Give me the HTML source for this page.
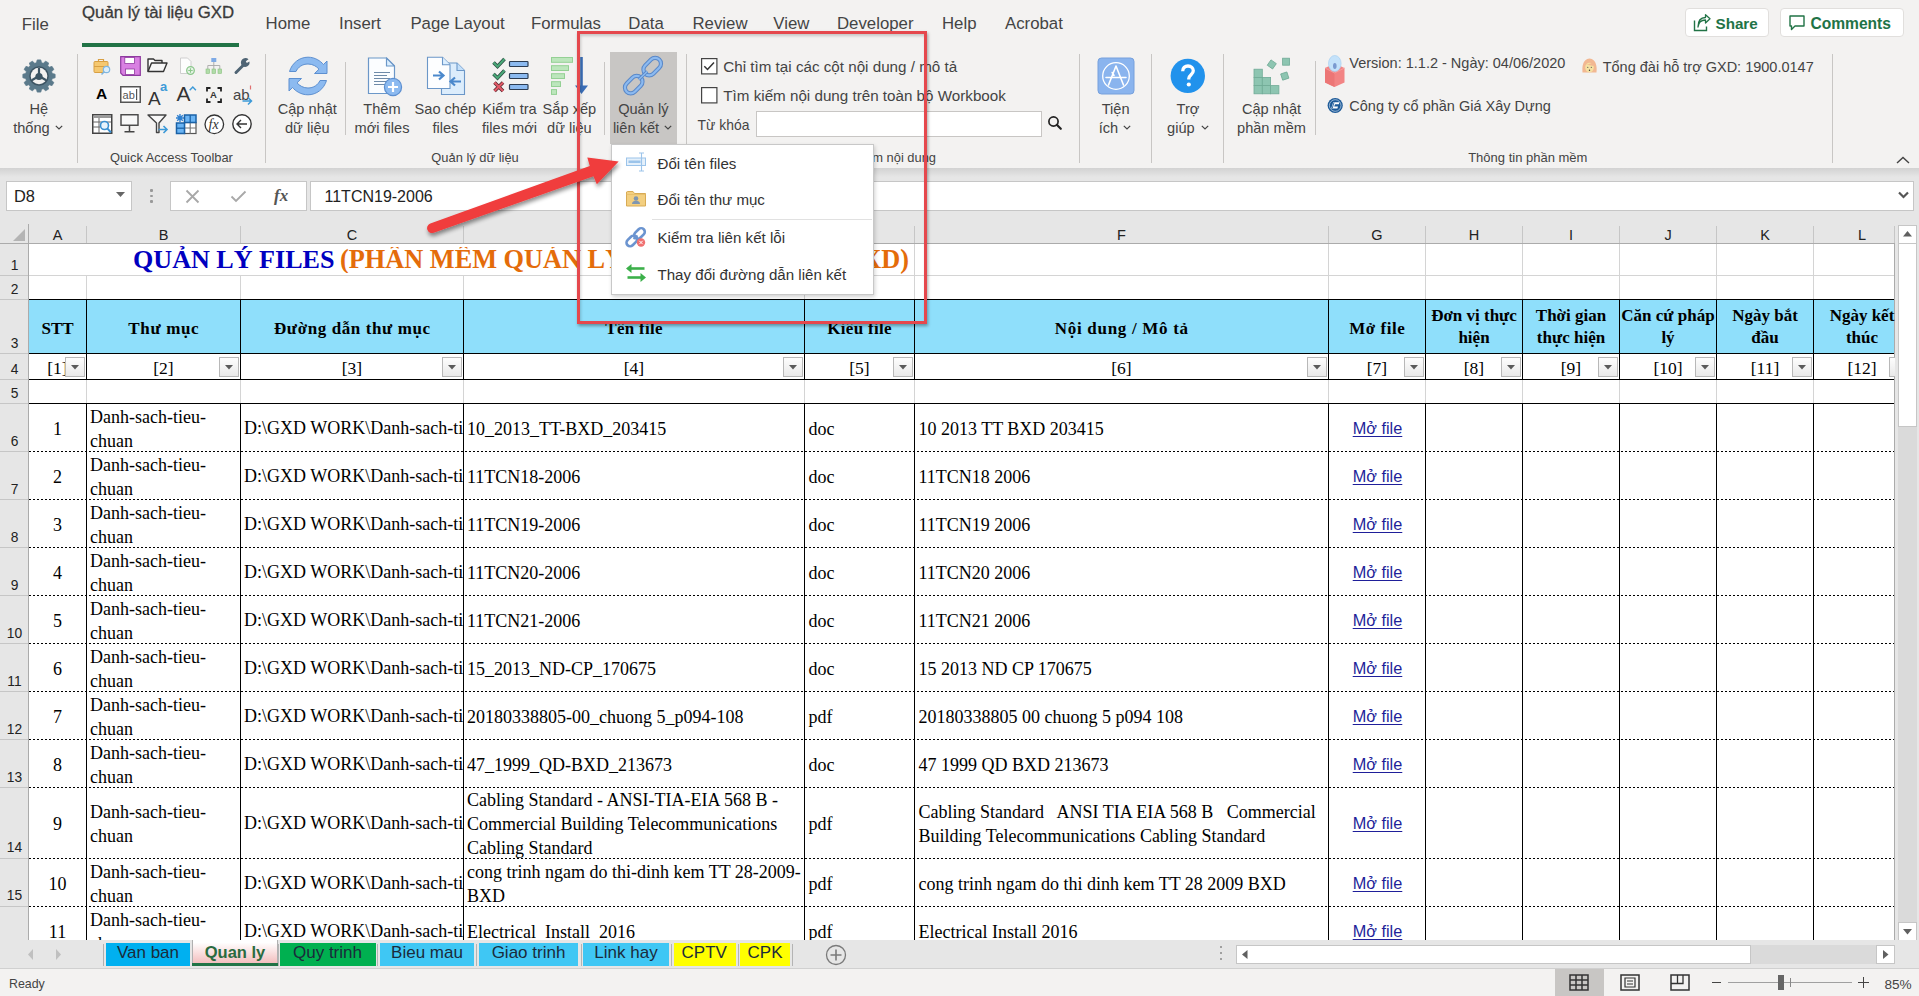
<!DOCTYPE html>
<html><head><meta charset="utf-8"><style>
html,body{margin:0;padding:0;width:1919px;height:996px;overflow:hidden;background:#fff;}
.a{position:absolute;white-space:nowrap;}
svg.a{overflow:visible}
</style></head><body>
<div class="a" style="left:0px;top:0px;width:1919px;height:168px;background:#f3f2f1"></div>
<div class="a" style="left:0px;top:168px;width:1919px;height:56px;background:#e6e6e6"></div>
<div class="a" style="left:0px;top:168px;width:1919px;height:9px;background:linear-gradient(#d2d2d2,#e6e6e6)"></div>
<div class="a" style="left:21.7px;top:17.0px;font:400 16.8px/16.8px 'Liberation Sans', sans-serif;color:#444;">File</div>
<div class="a" style="left:82.0px;top:5.0px;font:400 16.8px/16.8px 'Liberation Sans', sans-serif;color:#3a3a3a;-webkit-text-stroke:0.3px #3a3a3a">Quản lý tài liệu GXD</div>
<div class="a" style="left:82px;top:43px;width:157px;height:4px;background:#217346"></div>
<div class="a" style="left:265.6px;top:16.0px;font:400 16.8px/16.8px 'Liberation Sans', sans-serif;color:#444;">Home</div>
<div class="a" style="left:339.0px;top:16.0px;font:400 16.8px/16.8px 'Liberation Sans', sans-serif;color:#444;">Insert</div>
<div class="a" style="left:410.4px;top:16.0px;font:400 16.8px/16.8px 'Liberation Sans', sans-serif;color:#444;">Page Layout</div>
<div class="a" style="left:531.0px;top:16.0px;font:400 16.8px/16.8px 'Liberation Sans', sans-serif;color:#444;">Formulas</div>
<div class="a" style="left:628.3px;top:16.0px;font:400 16.8px/16.8px 'Liberation Sans', sans-serif;color:#444;">Data</div>
<div class="a" style="left:692.5px;top:16.0px;font:400 16.8px/16.8px 'Liberation Sans', sans-serif;color:#444;">Review</div>
<div class="a" style="left:773.3px;top:16.0px;font:400 16.8px/16.8px 'Liberation Sans', sans-serif;color:#444;">View</div>
<div class="a" style="left:837.0px;top:16.0px;font:400 16.8px/16.8px 'Liberation Sans', sans-serif;color:#444;">Developer</div>
<div class="a" style="left:942.0px;top:16.0px;font:400 16.8px/16.8px 'Liberation Sans', sans-serif;color:#444;">Help</div>
<div class="a" style="left:1005.0px;top:16.0px;font:400 16.8px/16.8px 'Liberation Sans', sans-serif;color:#444;">Acrobat</div>
<div class="a" style="left:1685px;top:8px;width:84px;height:29px;background:#fff;border:1px solid #e1dfdd;border-radius:4px;box-sizing:border-box"></div>
<div class="a" style="left:1780px;top:8px;width:124px;height:29px;background:#fff;border:1px solid #e1dfdd;border-radius:4px;box-sizing:border-box"></div>
<div class="a" style="left:1715.5px;top:16.0px;font:700 15.2px/15.2px 'Liberation Sans', sans-serif;color:#217346;">Share</div>
<div class="a" style="left:1810.4px;top:16.0px;font:700 15.6px/15.6px 'Liberation Sans', sans-serif;color:#217346;">Comments</div>
<div class="a" style="left:-361.3px;width:800px;text-align:center;top:102.0px;font:400 14.6px/14.6px 'Liberation Sans', sans-serif;color:#444;">Hệ</div>
<div class="a" style="left:-368.6px;width:800px;text-align:center;top:121.0px;font:400 14.6px/14.6px 'Liberation Sans', sans-serif;color:#444;">thống</div>
<div class="a" style="left:-228.6px;width:800px;text-align:center;top:152.0px;font:400 12.9px/12.9px 'Liberation Sans', sans-serif;color:#444;">Quick Access Toolbar</div>
<div class="a" style="left:-92.7px;width:800px;text-align:center;top:102.0px;font:400 14.6px/14.6px 'Liberation Sans', sans-serif;color:#444;">Cập nhật</div>
<div class="a" style="left:-92.7px;width:800px;text-align:center;top:121.0px;font:400 14.6px/14.6px 'Liberation Sans', sans-serif;color:#444;">dữ liệu</div>
<div class="a" style="left:-18.0px;width:800px;text-align:center;top:102.0px;font:400 14.6px/14.6px 'Liberation Sans', sans-serif;color:#444;">Thêm</div>
<div class="a" style="left:-18.0px;width:800px;text-align:center;top:121.0px;font:400 14.6px/14.6px 'Liberation Sans', sans-serif;color:#444;">mới files</div>
<div class="a" style="left:45.4px;width:800px;text-align:center;top:102.0px;font:400 14.6px/14.6px 'Liberation Sans', sans-serif;color:#444;">Sao chép</div>
<div class="a" style="left:45.4px;width:800px;text-align:center;top:121.0px;font:400 14.6px/14.6px 'Liberation Sans', sans-serif;color:#444;">files</div>
<div class="a" style="left:109.5px;width:800px;text-align:center;top:102.0px;font:400 14.6px/14.6px 'Liberation Sans', sans-serif;color:#444;">Kiểm tra</div>
<div class="a" style="left:109.5px;width:800px;text-align:center;top:121.0px;font:400 14.6px/14.6px 'Liberation Sans', sans-serif;color:#444;">files mới</div>
<div class="a" style="left:169.4px;width:800px;text-align:center;top:102.0px;font:400 14.6px/14.6px 'Liberation Sans', sans-serif;color:#444;">Sắp xếp</div>
<div class="a" style="left:169.4px;width:800px;text-align:center;top:121.0px;font:400 14.6px/14.6px 'Liberation Sans', sans-serif;color:#444;">dữ liệu</div>
<div class="a" style="left:75.0px;width:800px;text-align:center;top:152.0px;font:400 12.9px/12.9px 'Liberation Sans', sans-serif;color:#444;">Quản lý dữ liệu</div>
<div class="a" style="left:610px;top:52px;width:67px;height:92px;background:#c8c6c4"></div>
<div class="a" style="left:243.3px;width:800px;text-align:center;top:102.0px;font:400 14.6px/14.6px 'Liberation Sans', sans-serif;color:#444;">Quản lý</div>
<div class="a" style="left:236.0px;width:800px;text-align:center;top:121.0px;font:400 14.6px/14.6px 'Liberation Sans', sans-serif;color:#444;">liên kết</div>
<div class="a" style="left:483.0px;width:800px;text-align:center;top:152.0px;font:400 12.9px/12.9px 'Liberation Sans', sans-serif;color:#444;">Tìm kiếm nội dung</div>
<div class="a" style="left:723.3px;top:59.0px;font:400 15.2px/15.2px 'Liberation Sans', sans-serif;color:#444;">Chỉ tìm tại các cột nội dung / mô tả</div>
<div class="a" style="left:723.3px;top:88.0px;font:400 15.2px/15.2px 'Liberation Sans', sans-serif;color:#444;">Tìm kiếm nội dung trên toàn bộ Workbook</div>
<div class="a" style="left:697.6px;top:119.0px;font:400 13.9px/13.9px 'Liberation Sans', sans-serif;color:#444;">Từ khóa</div>
<div class="a" style="left:756px;top:111px;width:286px;height:26px;background:#fff;border:1px solid #c8c6c4;box-sizing:border-box"></div>
<div class="a" style="left:715.7px;width:800px;text-align:center;top:102.0px;font:400 14.6px/14.6px 'Liberation Sans', sans-serif;color:#444;">Tiện</div>
<div class="a" style="left:708.4px;width:800px;text-align:center;top:121.0px;font:400 14.6px/14.6px 'Liberation Sans', sans-serif;color:#444;">ích</div>
<div class="a" style="left:788.0px;width:800px;text-align:center;top:102.0px;font:400 14.6px/14.6px 'Liberation Sans', sans-serif;color:#444;">Trợ</div>
<div class="a" style="left:780.9px;width:800px;text-align:center;top:121.0px;font:400 14.6px/14.6px 'Liberation Sans', sans-serif;color:#444;">giúp</div>
<div class="a" style="left:871.5px;width:800px;text-align:center;top:102.0px;font:400 14.6px/14.6px 'Liberation Sans', sans-serif;color:#444;">Cập nhật</div>
<div class="a" style="left:871.5px;width:800px;text-align:center;top:121.0px;font:400 14.6px/14.6px 'Liberation Sans', sans-serif;color:#444;">phần mềm</div>
<div class="a" style="left:1349.3px;top:56.0px;font:400 14.5px/14.5px 'Liberation Sans', sans-serif;color:#444;">Version: 1.1.2 - Ngày: 04/06/2020</div>
<div class="a" style="left:1349.3px;top:99.0px;font:400 14.5px/14.5px 'Liberation Sans', sans-serif;color:#444;">Công ty cổ phần Giá Xây Dựng</div>
<div class="a" style="left:1602.7px;top:60.0px;font:400 14.5px/14.5px 'Liberation Sans', sans-serif;color:#444;">Tổng đài hỗ trợ GXD: 1900.0147</div>
<div class="a" style="left:1127.8px;width:800px;text-align:center;top:151.0px;font:400 13px/13px 'Liberation Sans', sans-serif;color:#444;">Thông tin phần mềm</div>
<div class="a" style="left:77px;top:54px;width:1px;height:109px;background:#c8c6c4"></div>
<div class="a" style="left:265px;top:54px;width:1px;height:109px;background:#c8c6c4"></div>
<div class="a" style="left:345px;top:62px;width:1px;height:73px;background:#c8c6c4"></div>
<div class="a" style="left:604px;top:62px;width:1px;height:73px;background:#c8c6c4"></div>
<div class="a" style="left:686px;top:54px;width:1px;height:109px;background:#c8c6c4"></div>
<div class="a" style="left:1079px;top:54px;width:1px;height:109px;background:#c8c6c4"></div>
<div class="a" style="left:1151px;top:54px;width:1px;height:109px;background:#c8c6c4"></div>
<div class="a" style="left:1223px;top:54px;width:1px;height:109px;background:#c8c6c4"></div>
<div class="a" style="left:1315px;top:61px;width:1px;height:74px;background:#c8c6c4"></div>
<div class="a" style="left:1832px;top:54px;width:1px;height:109px;background:#c8c6c4"></div>
<div class="a" style="left:6px;top:181px;width:126px;height:30px;background:#fff;border:1px solid #c6c6c6;box-sizing:border-box"></div>
<div class="a" style="left:14.0px;top:188.0px;font:400 16.4px/16.4px 'Liberation Sans', sans-serif;color:#222;">D8</div>
<div class="a" style="left:170px;top:181px;width:137px;height:30px;background:#fff;border:1px solid #c6c6c6;box-sizing:border-box"></div>
<div class="a" style="left:310px;top:181px;width:1604px;height:30px;background:#fff;border:1px solid #c6c6c6;box-sizing:border-box"></div>
<div class="a" style="left:324.5px;top:189.0px;font:400 16px/16px 'Liberation Sans', sans-serif;color:#222;">11TCN19-2006</div>
<div class="a" style="left:0px;top:224px;width:1919px;height:20px;background:#e6e6e6"></div>
<div class="a" style="left:0px;top:224px;width:28px;height:716px;background:#e6e6e6"></div>
<div class="a" style="left:29px;top:244px;width:1866px;height:696px;background:#fff"></div>
<div class="a" style="left:0px;top:243px;width:1895px;height:1px;background:#ababab"></div>
<div class="a" style="left:28px;top:224px;width:1px;height:716px;background:#ababab"></div>
<div class="a" style="left:-342.5px;width:800px;text-align:center;top:228.0px;font:400 14.5px/14.5px 'Liberation Sans', sans-serif;color:#222;">A</div>
<div class="a" style="left:-236.5px;width:800px;text-align:center;top:228.0px;font:400 14.5px/14.5px 'Liberation Sans', sans-serif;color:#222;">B</div>
<div class="a" style="left:86px;top:226px;width:1px;height:17px;background:#c6c6c6"></div>
<div class="a" style="left:-48.0px;width:800px;text-align:center;top:228.0px;font:400 14.5px/14.5px 'Liberation Sans', sans-serif;color:#222;">C</div>
<div class="a" style="left:240px;top:226px;width:1px;height:17px;background:#c6c6c6"></div>
<div class="a" style="left:234.0px;width:800px;text-align:center;top:228.0px;font:400 14.5px/14.5px 'Liberation Sans', sans-serif;color:#222;">D</div>
<div class="a" style="left:463px;top:226px;width:1px;height:17px;background:#c6c6c6"></div>
<div class="a" style="left:459.5px;width:800px;text-align:center;top:228.0px;font:400 14.5px/14.5px 'Liberation Sans', sans-serif;color:#222;">E</div>
<div class="a" style="left:804px;top:226px;width:1px;height:17px;background:#c6c6c6"></div>
<div class="a" style="left:721.5px;width:800px;text-align:center;top:228.0px;font:400 14.5px/14.5px 'Liberation Sans', sans-serif;color:#222;">F</div>
<div class="a" style="left:914px;top:226px;width:1px;height:17px;background:#c6c6c6"></div>
<div class="a" style="left:977.0px;width:800px;text-align:center;top:228.0px;font:400 14.5px/14.5px 'Liberation Sans', sans-serif;color:#222;">G</div>
<div class="a" style="left:1328px;top:226px;width:1px;height:17px;background:#c6c6c6"></div>
<div class="a" style="left:1074.0px;width:800px;text-align:center;top:228.0px;font:400 14.5px/14.5px 'Liberation Sans', sans-serif;color:#222;">H</div>
<div class="a" style="left:1425px;top:226px;width:1px;height:17px;background:#c6c6c6"></div>
<div class="a" style="left:1171.0px;width:800px;text-align:center;top:228.0px;font:400 14.5px/14.5px 'Liberation Sans', sans-serif;color:#222;">I</div>
<div class="a" style="left:1522px;top:226px;width:1px;height:17px;background:#c6c6c6"></div>
<div class="a" style="left:1268.0px;width:800px;text-align:center;top:228.0px;font:400 14.5px/14.5px 'Liberation Sans', sans-serif;color:#222;">J</div>
<div class="a" style="left:1619px;top:226px;width:1px;height:17px;background:#c6c6c6"></div>
<div class="a" style="left:1365.0px;width:800px;text-align:center;top:228.0px;font:400 14.5px/14.5px 'Liberation Sans', sans-serif;color:#222;">K</div>
<div class="a" style="left:1716px;top:226px;width:1px;height:17px;background:#c6c6c6"></div>
<div class="a" style="left:1462.0px;width:800px;text-align:center;top:228.0px;font:400 14.5px/14.5px 'Liberation Sans', sans-serif;color:#222;">L</div>
<div class="a" style="left:1813px;top:226px;width:1px;height:17px;background:#c6c6c6"></div>
<div class="a" style="left:1894px;top:226px;width:1px;height:17px;background:#c6c6c6"></div>
<div class="a" style="left:0px;top:275px;width:28px;height:1px;background:#c6c6c6"></div>
<div class="a" style="left:-385.5px;width:800px;text-align:center;top:259.0px;font:400 13.8px/13.8px 'Liberation Sans', sans-serif;color:#222;">1</div>
<div class="a" style="left:0px;top:299px;width:28px;height:1px;background:#c6c6c6"></div>
<div class="a" style="left:-385.5px;width:800px;text-align:center;top:283.0px;font:400 13.8px/13.8px 'Liberation Sans', sans-serif;color:#222;">2</div>
<div class="a" style="left:0px;top:353px;width:28px;height:1px;background:#c6c6c6"></div>
<div class="a" style="left:-385.5px;width:800px;text-align:center;top:337.0px;font:400 13.8px/13.8px 'Liberation Sans', sans-serif;color:#222;">3</div>
<div class="a" style="left:0px;top:379px;width:28px;height:1px;background:#c6c6c6"></div>
<div class="a" style="left:-385.5px;width:800px;text-align:center;top:363.0px;font:400 13.8px/13.8px 'Liberation Sans', sans-serif;color:#222;">4</div>
<div class="a" style="left:0px;top:403px;width:28px;height:1px;background:#c6c6c6"></div>
<div class="a" style="left:-385.5px;width:800px;text-align:center;top:387.0px;font:400 13.8px/13.8px 'Liberation Sans', sans-serif;color:#222;">5</div>
<div class="a" style="left:0px;top:451px;width:28px;height:1px;background:#c6c6c6"></div>
<div class="a" style="left:-385.5px;width:800px;text-align:center;top:435.0px;font:400 13.8px/13.8px 'Liberation Sans', sans-serif;color:#222;">6</div>
<div class="a" style="left:0px;top:499px;width:28px;height:1px;background:#c6c6c6"></div>
<div class="a" style="left:-385.5px;width:800px;text-align:center;top:483.0px;font:400 13.8px/13.8px 'Liberation Sans', sans-serif;color:#222;">7</div>
<div class="a" style="left:0px;top:547px;width:28px;height:1px;background:#c6c6c6"></div>
<div class="a" style="left:-385.5px;width:800px;text-align:center;top:531.0px;font:400 13.8px/13.8px 'Liberation Sans', sans-serif;color:#222;">8</div>
<div class="a" style="left:0px;top:595px;width:28px;height:1px;background:#c6c6c6"></div>
<div class="a" style="left:-385.5px;width:800px;text-align:center;top:579.0px;font:400 13.8px/13.8px 'Liberation Sans', sans-serif;color:#222;">9</div>
<div class="a" style="left:0px;top:643px;width:28px;height:1px;background:#c6c6c6"></div>
<div class="a" style="left:-385.5px;width:800px;text-align:center;top:627.0px;font:400 13.8px/13.8px 'Liberation Sans', sans-serif;color:#222;">10</div>
<div class="a" style="left:0px;top:691px;width:28px;height:1px;background:#c6c6c6"></div>
<div class="a" style="left:-385.5px;width:800px;text-align:center;top:675.0px;font:400 13.8px/13.8px 'Liberation Sans', sans-serif;color:#222;">11</div>
<div class="a" style="left:0px;top:739px;width:28px;height:1px;background:#c6c6c6"></div>
<div class="a" style="left:-385.5px;width:800px;text-align:center;top:723.0px;font:400 13.8px/13.8px 'Liberation Sans', sans-serif;color:#222;">12</div>
<div class="a" style="left:0px;top:787px;width:28px;height:1px;background:#c6c6c6"></div>
<div class="a" style="left:-385.5px;width:800px;text-align:center;top:771.0px;font:400 13.8px/13.8px 'Liberation Sans', sans-serif;color:#222;">13</div>
<div class="a" style="left:0px;top:858px;width:28px;height:1px;background:#c6c6c6"></div>
<div class="a" style="left:-385.5px;width:800px;text-align:center;top:841.0px;font:400 13.8px/13.8px 'Liberation Sans', sans-serif;color:#222;">14</div>
<div class="a" style="left:0px;top:906px;width:28px;height:1px;background:#c6c6c6"></div>
<div class="a" style="left:-385.5px;width:800px;text-align:center;top:889.0px;font:400 13.8px/13.8px 'Liberation Sans', sans-serif;color:#222;">15</div>
<div class="a" style="left:1894px;top:244px;width:1px;height:696px;background:#ababab"></div>
<div class="a" style="left:29px;top:300px;width:1865px;height:53px;background:#8fdffb"></div>
<div class="a" style="left:29px;top:275px;width:1865px;height:1px;background:#d4d4d4"></div>
<div class="a" style="left:29px;top:299px;width:1865px;height:1px;background:#000"></div>
<div class="a" style="left:29px;top:353px;width:1865px;height:1px;background:#000"></div>
<div class="a" style="left:29px;top:379px;width:1865px;height:1px;background:#000"></div>
<div class="a" style="left:29px;top:403px;width:1865px;height:1px;background:#000"></div>
<div class="a" style="left:29px;top:451px;width:1865px;height:1px;background:repeating-linear-gradient(90deg,#000 0 2px,transparent 2px 4px)"></div>
<div class="a" style="left:29px;top:499px;width:1865px;height:1px;background:repeating-linear-gradient(90deg,#000 0 2px,transparent 2px 4px)"></div>
<div class="a" style="left:29px;top:547px;width:1865px;height:1px;background:repeating-linear-gradient(90deg,#000 0 2px,transparent 2px 4px)"></div>
<div class="a" style="left:29px;top:595px;width:1865px;height:1px;background:repeating-linear-gradient(90deg,#000 0 2px,transparent 2px 4px)"></div>
<div class="a" style="left:29px;top:643px;width:1865px;height:1px;background:repeating-linear-gradient(90deg,#000 0 2px,transparent 2px 4px)"></div>
<div class="a" style="left:29px;top:691px;width:1865px;height:1px;background:repeating-linear-gradient(90deg,#000 0 2px,transparent 2px 4px)"></div>
<div class="a" style="left:29px;top:739px;width:1865px;height:1px;background:repeating-linear-gradient(90deg,#000 0 2px,transparent 2px 4px)"></div>
<div class="a" style="left:29px;top:787px;width:1865px;height:1px;background:repeating-linear-gradient(90deg,#000 0 2px,transparent 2px 4px)"></div>
<div class="a" style="left:29px;top:858px;width:1865px;height:1px;background:repeating-linear-gradient(90deg,#000 0 2px,transparent 2px 4px)"></div>
<div class="a" style="left:29px;top:906px;width:1865px;height:1px;background:repeating-linear-gradient(90deg,#000 0 2px,transparent 2px 4px)"></div>
<div class="a" style="left:86px;top:276px;width:1px;height:23px;background:#d4d4d4"></div>
<div class="a" style="left:86px;top:300px;width:1px;height:79px;background:#000"></div>
<div class="a" style="left:86px;top:380px;width:1px;height:23px;background:#d4d4d4"></div>
<div class="a" style="left:86px;top:404px;width:1px;height:536px;background:#000"></div>
<div class="a" style="left:240px;top:276px;width:1px;height:23px;background:#d4d4d4"></div>
<div class="a" style="left:240px;top:300px;width:1px;height:79px;background:#000"></div>
<div class="a" style="left:240px;top:380px;width:1px;height:23px;background:#d4d4d4"></div>
<div class="a" style="left:240px;top:404px;width:1px;height:536px;background:#000"></div>
<div class="a" style="left:463px;top:276px;width:1px;height:23px;background:#d4d4d4"></div>
<div class="a" style="left:463px;top:300px;width:1px;height:79px;background:#000"></div>
<div class="a" style="left:463px;top:380px;width:1px;height:23px;background:#d4d4d4"></div>
<div class="a" style="left:463px;top:404px;width:1px;height:536px;background:#000"></div>
<div class="a" style="left:804px;top:276px;width:1px;height:23px;background:#d4d4d4"></div>
<div class="a" style="left:804px;top:300px;width:1px;height:79px;background:#000"></div>
<div class="a" style="left:804px;top:380px;width:1px;height:23px;background:#d4d4d4"></div>
<div class="a" style="left:804px;top:404px;width:1px;height:536px;background:#000"></div>
<div class="a" style="left:914px;top:244px;width:1px;height:31px;background:#d4d4d4"></div>
<div class="a" style="left:914px;top:276px;width:1px;height:23px;background:#d4d4d4"></div>
<div class="a" style="left:914px;top:300px;width:1px;height:79px;background:#000"></div>
<div class="a" style="left:914px;top:380px;width:1px;height:23px;background:#d4d4d4"></div>
<div class="a" style="left:914px;top:404px;width:1px;height:536px;background:#000"></div>
<div class="a" style="left:1328px;top:244px;width:1px;height:31px;background:#d4d4d4"></div>
<div class="a" style="left:1328px;top:276px;width:1px;height:23px;background:#d4d4d4"></div>
<div class="a" style="left:1328px;top:300px;width:1px;height:79px;background:#000"></div>
<div class="a" style="left:1328px;top:380px;width:1px;height:23px;background:#d4d4d4"></div>
<div class="a" style="left:1328px;top:404px;width:1px;height:536px;background:#000"></div>
<div class="a" style="left:1425px;top:244px;width:1px;height:31px;background:#d4d4d4"></div>
<div class="a" style="left:1425px;top:276px;width:1px;height:23px;background:#d4d4d4"></div>
<div class="a" style="left:1425px;top:300px;width:1px;height:79px;background:#000"></div>
<div class="a" style="left:1425px;top:380px;width:1px;height:23px;background:#d4d4d4"></div>
<div class="a" style="left:1425px;top:404px;width:1px;height:536px;background:#000"></div>
<div class="a" style="left:1522px;top:244px;width:1px;height:31px;background:#d4d4d4"></div>
<div class="a" style="left:1522px;top:276px;width:1px;height:23px;background:#d4d4d4"></div>
<div class="a" style="left:1522px;top:300px;width:1px;height:79px;background:#000"></div>
<div class="a" style="left:1522px;top:380px;width:1px;height:23px;background:#d4d4d4"></div>
<div class="a" style="left:1522px;top:404px;width:1px;height:536px;background:#000"></div>
<div class="a" style="left:1619px;top:244px;width:1px;height:31px;background:#d4d4d4"></div>
<div class="a" style="left:1619px;top:276px;width:1px;height:23px;background:#d4d4d4"></div>
<div class="a" style="left:1619px;top:300px;width:1px;height:79px;background:#000"></div>
<div class="a" style="left:1619px;top:380px;width:1px;height:23px;background:#d4d4d4"></div>
<div class="a" style="left:1619px;top:404px;width:1px;height:536px;background:#000"></div>
<div class="a" style="left:1716px;top:244px;width:1px;height:31px;background:#d4d4d4"></div>
<div class="a" style="left:1716px;top:276px;width:1px;height:23px;background:#d4d4d4"></div>
<div class="a" style="left:1716px;top:300px;width:1px;height:79px;background:#000"></div>
<div class="a" style="left:1716px;top:380px;width:1px;height:23px;background:#d4d4d4"></div>
<div class="a" style="left:1716px;top:404px;width:1px;height:536px;background:#000"></div>
<div class="a" style="left:1813px;top:244px;width:1px;height:31px;background:#d4d4d4"></div>
<div class="a" style="left:1813px;top:276px;width:1px;height:23px;background:#d4d4d4"></div>
<div class="a" style="left:1813px;top:300px;width:1px;height:79px;background:#000"></div>
<div class="a" style="left:1813px;top:380px;width:1px;height:23px;background:#d4d4d4"></div>
<div class="a" style="left:1813px;top:404px;width:1px;height:536px;background:#000"></div>
<div class="a" style="left:133.0px;top:247.0px;font:700 26.1px/26.1px 'Liberation Serif', serif;color:#0000c0;">QUẢN LÝ FILES </div>
<div class="a" style="left:340.0px;top:247.0px;font:700 26.3px/26.3px 'Liberation Serif', serif;color:#e46c0a;width:569px;overflow:hidden">(PHẦN MỀM QUẢN LÝ TÀI LIỆU GXD)</div>
<div class="a" style="left:109.0px;width:800px;text-align:right;top:247.0px;font:700 26.3px/26.3px 'Liberation Serif', serif;color:#e46c0a;">GXD)</div>
<div class="a" style="left:-342.5px;width:800px;text-align:center;top:320.0px;font:700 17px/17px 'Liberation Serif', serif;color:#000;letter-spacing:0px">STT</div>
<div class="a" style="left:-236.2px;width:800px;text-align:center;top:320.0px;font:700 17px/17px 'Liberation Serif', serif;color:#000;letter-spacing:0.65px">Thư mục</div>
<div class="a" style="left:-47.7px;width:800px;text-align:center;top:320.0px;font:700 17px/17px 'Liberation Serif', serif;color:#000;letter-spacing:0.6px">Đường dẫn thư mục</div>
<div class="a" style="left:234.1px;width:800px;text-align:center;top:320.0px;font:700 17px/17px 'Liberation Serif', serif;color:#000;letter-spacing:0.3px">Tên file</div>
<div class="a" style="left:459.6px;width:800px;text-align:center;top:320.0px;font:700 17px/17px 'Liberation Serif', serif;color:#000;letter-spacing:0.3px">Kiểu file</div>
<div class="a" style="left:721.8px;width:800px;text-align:center;top:320.0px;font:700 17px/17px 'Liberation Serif', serif;color:#000;letter-spacing:0.7px">Nội dung / Mô tả</div>
<div class="a" style="left:977.3px;width:800px;text-align:center;top:320.0px;font:700 17px/17px 'Liberation Serif', serif;color:#000;letter-spacing:0.55px">Mở file</div>
<div class="a" style="left:1074.0px;width:800px;text-align:center;top:307.0px;font:700 17px/17px 'Liberation Serif', serif;color:#000;">Đơn vị thực</div>
<div class="a" style="left:1074.0px;width:800px;text-align:center;top:329.0px;font:700 17px/17px 'Liberation Serif', serif;color:#000;">hiện</div>
<div class="a" style="left:1171.0px;width:800px;text-align:center;top:307.0px;font:700 17px/17px 'Liberation Serif', serif;color:#000;">Thời gian</div>
<div class="a" style="left:1171.0px;width:800px;text-align:center;top:329.0px;font:700 17px/17px 'Liberation Serif', serif;color:#000;">thực hiện</div>
<div class="a" style="left:1268.0px;width:800px;text-align:center;top:307.0px;font:700 17px/17px 'Liberation Serif', serif;color:#000;">Căn cứ pháp</div>
<div class="a" style="left:1268.0px;width:800px;text-align:center;top:329.0px;font:700 17px/17px 'Liberation Serif', serif;color:#000;">lý</div>
<div class="a" style="left:1365.0px;width:800px;text-align:center;top:307.0px;font:700 17px/17px 'Liberation Serif', serif;color:#000;">Ngày bắt</div>
<div class="a" style="left:1365.0px;width:800px;text-align:center;top:329.0px;font:700 17px/17px 'Liberation Serif', serif;color:#000;">đầu</div>
<div class="a" style="left:1462.0px;width:800px;text-align:center;top:307.0px;font:700 17px/17px 'Liberation Serif', serif;color:#000;">Ngày kết</div>
<div class="a" style="left:1462.0px;width:800px;text-align:center;top:329.0px;font:700 17px/17px 'Liberation Serif', serif;color:#000;">thúc</div>
<div class="a" style="left:-342.5px;width:800px;text-align:center;top:360.0px;font:400 17.5px/17.5px 'Liberation Serif', serif;color:#000;">[1]</div>
<div class="a" style="left:65px;top:357px;width:20px;height:20px;background:linear-gradient(#fdfdfd,#e9e9e9);border:1px solid #b8b8b8;box-sizing:border-box"></div>
<svg class="a" style="left:71px;top:365px;" width="8" height="5" viewBox="0 0 8 5"><path d="M0 0H8L4 4.5Z" fill="#5a5a5a"/></svg>
<div class="a" style="left:-236.5px;width:800px;text-align:center;top:360.0px;font:400 17.5px/17.5px 'Liberation Serif', serif;color:#000;">[2]</div>
<div class="a" style="left:219px;top:357px;width:20px;height:20px;background:linear-gradient(#fdfdfd,#e9e9e9);border:1px solid #b8b8b8;box-sizing:border-box"></div>
<svg class="a" style="left:225px;top:365px;" width="8" height="5" viewBox="0 0 8 5"><path d="M0 0H8L4 4.5Z" fill="#5a5a5a"/></svg>
<div class="a" style="left:-48.0px;width:800px;text-align:center;top:360.0px;font:400 17.5px/17.5px 'Liberation Serif', serif;color:#000;">[3]</div>
<div class="a" style="left:442px;top:357px;width:20px;height:20px;background:linear-gradient(#fdfdfd,#e9e9e9);border:1px solid #b8b8b8;box-sizing:border-box"></div>
<svg class="a" style="left:448px;top:365px;" width="8" height="5" viewBox="0 0 8 5"><path d="M0 0H8L4 4.5Z" fill="#5a5a5a"/></svg>
<div class="a" style="left:234.0px;width:800px;text-align:center;top:360.0px;font:400 17.5px/17.5px 'Liberation Serif', serif;color:#000;">[4]</div>
<div class="a" style="left:783px;top:357px;width:20px;height:20px;background:linear-gradient(#fdfdfd,#e9e9e9);border:1px solid #b8b8b8;box-sizing:border-box"></div>
<svg class="a" style="left:789px;top:365px;" width="8" height="5" viewBox="0 0 8 5"><path d="M0 0H8L4 4.5Z" fill="#5a5a5a"/></svg>
<div class="a" style="left:459.5px;width:800px;text-align:center;top:360.0px;font:400 17.5px/17.5px 'Liberation Serif', serif;color:#000;">[5]</div>
<div class="a" style="left:893px;top:357px;width:20px;height:20px;background:linear-gradient(#fdfdfd,#e9e9e9);border:1px solid #b8b8b8;box-sizing:border-box"></div>
<svg class="a" style="left:899px;top:365px;" width="8" height="5" viewBox="0 0 8 5"><path d="M0 0H8L4 4.5Z" fill="#5a5a5a"/></svg>
<div class="a" style="left:721.5px;width:800px;text-align:center;top:360.0px;font:400 17.5px/17.5px 'Liberation Serif', serif;color:#000;">[6]</div>
<div class="a" style="left:1307px;top:357px;width:20px;height:20px;background:linear-gradient(#fdfdfd,#e9e9e9);border:1px solid #b8b8b8;box-sizing:border-box"></div>
<svg class="a" style="left:1313px;top:365px;" width="8" height="5" viewBox="0 0 8 5"><path d="M0 0H8L4 4.5Z" fill="#5a5a5a"/></svg>
<div class="a" style="left:977.0px;width:800px;text-align:center;top:360.0px;font:400 17.5px/17.5px 'Liberation Serif', serif;color:#000;">[7]</div>
<div class="a" style="left:1404px;top:357px;width:20px;height:20px;background:linear-gradient(#fdfdfd,#e9e9e9);border:1px solid #b8b8b8;box-sizing:border-box"></div>
<svg class="a" style="left:1410px;top:365px;" width="8" height="5" viewBox="0 0 8 5"><path d="M0 0H8L4 4.5Z" fill="#5a5a5a"/></svg>
<div class="a" style="left:1074.0px;width:800px;text-align:center;top:360.0px;font:400 17.5px/17.5px 'Liberation Serif', serif;color:#000;">[8]</div>
<div class="a" style="left:1501px;top:357px;width:20px;height:20px;background:linear-gradient(#fdfdfd,#e9e9e9);border:1px solid #b8b8b8;box-sizing:border-box"></div>
<svg class="a" style="left:1507px;top:365px;" width="8" height="5" viewBox="0 0 8 5"><path d="M0 0H8L4 4.5Z" fill="#5a5a5a"/></svg>
<div class="a" style="left:1171.0px;width:800px;text-align:center;top:360.0px;font:400 17.5px/17.5px 'Liberation Serif', serif;color:#000;">[9]</div>
<div class="a" style="left:1598px;top:357px;width:20px;height:20px;background:linear-gradient(#fdfdfd,#e9e9e9);border:1px solid #b8b8b8;box-sizing:border-box"></div>
<svg class="a" style="left:1604px;top:365px;" width="8" height="5" viewBox="0 0 8 5"><path d="M0 0H8L4 4.5Z" fill="#5a5a5a"/></svg>
<div class="a" style="left:1268.0px;width:800px;text-align:center;top:360.0px;font:400 17.5px/17.5px 'Liberation Serif', serif;color:#000;">[10]</div>
<div class="a" style="left:1695px;top:357px;width:20px;height:20px;background:linear-gradient(#fdfdfd,#e9e9e9);border:1px solid #b8b8b8;box-sizing:border-box"></div>
<svg class="a" style="left:1701px;top:365px;" width="8" height="5" viewBox="0 0 8 5"><path d="M0 0H8L4 4.5Z" fill="#5a5a5a"/></svg>
<div class="a" style="left:1365.0px;width:800px;text-align:center;top:360.0px;font:400 17.5px/17.5px 'Liberation Serif', serif;color:#000;">[11]</div>
<div class="a" style="left:1792px;top:357px;width:20px;height:20px;background:linear-gradient(#fdfdfd,#e9e9e9);border:1px solid #b8b8b8;box-sizing:border-box"></div>
<svg class="a" style="left:1798px;top:365px;" width="8" height="5" viewBox="0 0 8 5"><path d="M0 0H8L4 4.5Z" fill="#5a5a5a"/></svg>
<div class="a" style="left:1462.0px;width:800px;text-align:center;top:360.0px;font:400 17.5px/17.5px 'Liberation Serif', serif;color:#000;">[12]</div>
<div class="a" style="left:1889px;top:357px;width:20px;height:20px;background:linear-gradient(#fdfdfd,#e9e9e9);border:1px solid #b8b8b8;box-sizing:border-box"></div>
<svg class="a" style="left:1895px;top:365px;" width="8" height="5" viewBox="0 0 8 5"><path d="M0 0H8L4 4.5Z" fill="#5a5a5a"/></svg>
<div class="a" style="left:-342.5px;width:800px;text-align:center;top:420.0px;font:400 18px/18px 'Liberation Serif', serif;color:#000;">1</div>
<div class="a" style="left:90.0px;top:408.0px;font:400 18px/18px 'Liberation Serif', serif;color:#000;">Danh-sach-tieu-</div>
<div class="a" style="left:90.0px;top:432.0px;font:400 18px/18px 'Liberation Serif', serif;color:#000;">chuan</div>
<div class="a" style="left:244.0px;top:419.0px;font:400 18px/18px 'Liberation Serif', serif;color:#000;width:219px;overflow:hidden">D:\GXD WORK\Danh-sach-tieu-chuan</div>
<div class="a" style="left:467.0px;top:420.0px;font:400 18px/18px 'Liberation Serif', serif;color:#000;">10_2013_TT-BXD_203415</div>
<div class="a" style="left:808.5px;top:420.0px;font:400 18px/18px 'Liberation Serif', serif;color:#000;">doc</div>
<div class="a" style="left:918.5px;top:420.0px;font:400 18px/18px 'Liberation Serif', serif;color:#000;">10 2013 TT BXD 203415</div>
<div class="a" style="left:977.5px;width:800px;text-align:center;top:420.0px;font:400 16.3px/16.3px 'Liberation Sans', sans-serif;color:#1f1f9a;"><span style="text-decoration:underline;text-underline-offset:1.5px">Mở file</span></div>
<div class="a" style="left:-342.5px;width:800px;text-align:center;top:468.0px;font:400 18px/18px 'Liberation Serif', serif;color:#000;">2</div>
<div class="a" style="left:90.0px;top:456.0px;font:400 18px/18px 'Liberation Serif', serif;color:#000;">Danh-sach-tieu-</div>
<div class="a" style="left:90.0px;top:480.0px;font:400 18px/18px 'Liberation Serif', serif;color:#000;">chuan</div>
<div class="a" style="left:244.0px;top:467.0px;font:400 18px/18px 'Liberation Serif', serif;color:#000;width:219px;overflow:hidden">D:\GXD WORK\Danh-sach-tieu-chuan</div>
<div class="a" style="left:467.0px;top:468.0px;font:400 18px/18px 'Liberation Serif', serif;color:#000;">11TCN18-2006</div>
<div class="a" style="left:808.5px;top:468.0px;font:400 18px/18px 'Liberation Serif', serif;color:#000;">doc</div>
<div class="a" style="left:918.5px;top:468.0px;font:400 18px/18px 'Liberation Serif', serif;color:#000;">11TCN18 2006</div>
<div class="a" style="left:977.5px;width:800px;text-align:center;top:468.0px;font:400 16.3px/16.3px 'Liberation Sans', sans-serif;color:#1f1f9a;"><span style="text-decoration:underline;text-underline-offset:1.5px">Mở file</span></div>
<div class="a" style="left:-342.5px;width:800px;text-align:center;top:516.0px;font:400 18px/18px 'Liberation Serif', serif;color:#000;">3</div>
<div class="a" style="left:90.0px;top:504.0px;font:400 18px/18px 'Liberation Serif', serif;color:#000;">Danh-sach-tieu-</div>
<div class="a" style="left:90.0px;top:528.0px;font:400 18px/18px 'Liberation Serif', serif;color:#000;">chuan</div>
<div class="a" style="left:244.0px;top:515.0px;font:400 18px/18px 'Liberation Serif', serif;color:#000;width:219px;overflow:hidden">D:\GXD WORK\Danh-sach-tieu-chuan</div>
<div class="a" style="left:467.0px;top:516.0px;font:400 18px/18px 'Liberation Serif', serif;color:#000;">11TCN19-2006</div>
<div class="a" style="left:808.5px;top:516.0px;font:400 18px/18px 'Liberation Serif', serif;color:#000;">doc</div>
<div class="a" style="left:918.5px;top:516.0px;font:400 18px/18px 'Liberation Serif', serif;color:#000;">11TCN19 2006</div>
<div class="a" style="left:977.5px;width:800px;text-align:center;top:516.0px;font:400 16.3px/16.3px 'Liberation Sans', sans-serif;color:#1f1f9a;"><span style="text-decoration:underline;text-underline-offset:1.5px">Mở file</span></div>
<div class="a" style="left:-342.5px;width:800px;text-align:center;top:564.0px;font:400 18px/18px 'Liberation Serif', serif;color:#000;">4</div>
<div class="a" style="left:90.0px;top:552.0px;font:400 18px/18px 'Liberation Serif', serif;color:#000;">Danh-sach-tieu-</div>
<div class="a" style="left:90.0px;top:576.0px;font:400 18px/18px 'Liberation Serif', serif;color:#000;">chuan</div>
<div class="a" style="left:244.0px;top:563.0px;font:400 18px/18px 'Liberation Serif', serif;color:#000;width:219px;overflow:hidden">D:\GXD WORK\Danh-sach-tieu-chuan</div>
<div class="a" style="left:467.0px;top:564.0px;font:400 18px/18px 'Liberation Serif', serif;color:#000;">11TCN20-2006</div>
<div class="a" style="left:808.5px;top:564.0px;font:400 18px/18px 'Liberation Serif', serif;color:#000;">doc</div>
<div class="a" style="left:918.5px;top:564.0px;font:400 18px/18px 'Liberation Serif', serif;color:#000;">11TCN20 2006</div>
<div class="a" style="left:977.5px;width:800px;text-align:center;top:564.0px;font:400 16.3px/16.3px 'Liberation Sans', sans-serif;color:#1f1f9a;"><span style="text-decoration:underline;text-underline-offset:1.5px">Mở file</span></div>
<div class="a" style="left:-342.5px;width:800px;text-align:center;top:612.0px;font:400 18px/18px 'Liberation Serif', serif;color:#000;">5</div>
<div class="a" style="left:90.0px;top:600.0px;font:400 18px/18px 'Liberation Serif', serif;color:#000;">Danh-sach-tieu-</div>
<div class="a" style="left:90.0px;top:624.0px;font:400 18px/18px 'Liberation Serif', serif;color:#000;">chuan</div>
<div class="a" style="left:244.0px;top:611.0px;font:400 18px/18px 'Liberation Serif', serif;color:#000;width:219px;overflow:hidden">D:\GXD WORK\Danh-sach-tieu-chuan</div>
<div class="a" style="left:467.0px;top:612.0px;font:400 18px/18px 'Liberation Serif', serif;color:#000;">11TCN21-2006</div>
<div class="a" style="left:808.5px;top:612.0px;font:400 18px/18px 'Liberation Serif', serif;color:#000;">doc</div>
<div class="a" style="left:918.5px;top:612.0px;font:400 18px/18px 'Liberation Serif', serif;color:#000;">11TCN21 2006</div>
<div class="a" style="left:977.5px;width:800px;text-align:center;top:612.0px;font:400 16.3px/16.3px 'Liberation Sans', sans-serif;color:#1f1f9a;"><span style="text-decoration:underline;text-underline-offset:1.5px">Mở file</span></div>
<div class="a" style="left:-342.5px;width:800px;text-align:center;top:660.0px;font:400 18px/18px 'Liberation Serif', serif;color:#000;">6</div>
<div class="a" style="left:90.0px;top:648.0px;font:400 18px/18px 'Liberation Serif', serif;color:#000;">Danh-sach-tieu-</div>
<div class="a" style="left:90.0px;top:672.0px;font:400 18px/18px 'Liberation Serif', serif;color:#000;">chuan</div>
<div class="a" style="left:244.0px;top:659.0px;font:400 18px/18px 'Liberation Serif', serif;color:#000;width:219px;overflow:hidden">D:\GXD WORK\Danh-sach-tieu-chuan</div>
<div class="a" style="left:467.0px;top:660.0px;font:400 18px/18px 'Liberation Serif', serif;color:#000;">15_2013_ND-CP_170675</div>
<div class="a" style="left:808.5px;top:660.0px;font:400 18px/18px 'Liberation Serif', serif;color:#000;">doc</div>
<div class="a" style="left:918.5px;top:660.0px;font:400 18px/18px 'Liberation Serif', serif;color:#000;">15 2013 ND CP 170675</div>
<div class="a" style="left:977.5px;width:800px;text-align:center;top:660.0px;font:400 16.3px/16.3px 'Liberation Sans', sans-serif;color:#1f1f9a;"><span style="text-decoration:underline;text-underline-offset:1.5px">Mở file</span></div>
<div class="a" style="left:-342.5px;width:800px;text-align:center;top:708.0px;font:400 18px/18px 'Liberation Serif', serif;color:#000;">7</div>
<div class="a" style="left:90.0px;top:696.0px;font:400 18px/18px 'Liberation Serif', serif;color:#000;">Danh-sach-tieu-</div>
<div class="a" style="left:90.0px;top:720.0px;font:400 18px/18px 'Liberation Serif', serif;color:#000;">chuan</div>
<div class="a" style="left:244.0px;top:707.0px;font:400 18px/18px 'Liberation Serif', serif;color:#000;width:219px;overflow:hidden">D:\GXD WORK\Danh-sach-tieu-chuan</div>
<div class="a" style="left:467.0px;top:708.0px;font:400 18px/18px 'Liberation Serif', serif;color:#000;">20180338805-00_chuong 5_p094-108</div>
<div class="a" style="left:808.5px;top:708.0px;font:400 18px/18px 'Liberation Serif', serif;color:#000;">pdf</div>
<div class="a" style="left:918.5px;top:708.0px;font:400 18px/18px 'Liberation Serif', serif;color:#000;">20180338805 00 chuong 5 p094 108</div>
<div class="a" style="left:977.5px;width:800px;text-align:center;top:708.0px;font:400 16.3px/16.3px 'Liberation Sans', sans-serif;color:#1f1f9a;"><span style="text-decoration:underline;text-underline-offset:1.5px">Mở file</span></div>
<div class="a" style="left:-342.5px;width:800px;text-align:center;top:756.0px;font:400 18px/18px 'Liberation Serif', serif;color:#000;">8</div>
<div class="a" style="left:90.0px;top:744.0px;font:400 18px/18px 'Liberation Serif', serif;color:#000;">Danh-sach-tieu-</div>
<div class="a" style="left:90.0px;top:768.0px;font:400 18px/18px 'Liberation Serif', serif;color:#000;">chuan</div>
<div class="a" style="left:244.0px;top:755.0px;font:400 18px/18px 'Liberation Serif', serif;color:#000;width:219px;overflow:hidden">D:\GXD WORK\Danh-sach-tieu-chuan</div>
<div class="a" style="left:467.0px;top:756.0px;font:400 18px/18px 'Liberation Serif', serif;color:#000;">47_1999_QD-BXD_213673</div>
<div class="a" style="left:808.5px;top:756.0px;font:400 18px/18px 'Liberation Serif', serif;color:#000;">doc</div>
<div class="a" style="left:918.5px;top:756.0px;font:400 18px/18px 'Liberation Serif', serif;color:#000;">47 1999 QD BXD 213673</div>
<div class="a" style="left:977.5px;width:800px;text-align:center;top:756.0px;font:400 16.3px/16.3px 'Liberation Sans', sans-serif;color:#1f1f9a;"><span style="text-decoration:underline;text-underline-offset:1.5px">Mở file</span></div>
<div class="a" style="left:-342.5px;width:800px;text-align:center;top:815.0px;font:400 18px/18px 'Liberation Serif', serif;color:#000;">9</div>
<div class="a" style="left:90.0px;top:803.0px;font:400 18px/18px 'Liberation Serif', serif;color:#000;">Danh-sach-tieu-</div>
<div class="a" style="left:90.0px;top:827.0px;font:400 18px/18px 'Liberation Serif', serif;color:#000;">chuan</div>
<div class="a" style="left:244.0px;top:814.0px;font:400 18px/18px 'Liberation Serif', serif;color:#000;width:219px;overflow:hidden">D:\GXD WORK\Danh-sach-tieu-chuan</div>
<div class="a" style="left:467.0px;top:791.0px;font:400 18px/18px 'Liberation Serif', serif;color:#000;">Cabling Standard - ANSI-TIA-EIA 568 B -</div>
<div class="a" style="left:467.0px;top:815.0px;font:400 18px/18px 'Liberation Serif', serif;color:#000;">Commercial Building Telecommunications</div>
<div class="a" style="left:467.0px;top:839.0px;font:400 18px/18px 'Liberation Serif', serif;color:#000;">Cabling Standard</div>
<div class="a" style="left:808.5px;top:815.0px;font:400 18px/18px 'Liberation Serif', serif;color:#000;">pdf</div>
<div class="a" style="left:918.5px;top:803.0px;font:400 18px/18px 'Liberation Serif', serif;color:#000;">Cabling Standard &nbsp; ANSI TIA EIA 568 B &nbsp; Commercial</div>
<div class="a" style="left:918.5px;top:827.0px;font:400 18px/18px 'Liberation Serif', serif;color:#000;">Building Telecommunications Cabling Standard</div>
<div class="a" style="left:977.5px;width:800px;text-align:center;top:815.0px;font:400 16.3px/16.3px 'Liberation Sans', sans-serif;color:#1f1f9a;"><span style="text-decoration:underline;text-underline-offset:1.5px">Mở file</span></div>
<div class="a" style="left:-342.5px;width:800px;text-align:center;top:875.0px;font:400 18px/18px 'Liberation Serif', serif;color:#000;">10</div>
<div class="a" style="left:90.0px;top:863.0px;font:400 18px/18px 'Liberation Serif', serif;color:#000;">Danh-sach-tieu-</div>
<div class="a" style="left:90.0px;top:887.0px;font:400 18px/18px 'Liberation Serif', serif;color:#000;">chuan</div>
<div class="a" style="left:244.0px;top:874.0px;font:400 18px/18px 'Liberation Serif', serif;color:#000;width:219px;overflow:hidden">D:\GXD WORK\Danh-sach-tieu-chuan</div>
<div class="a" style="left:467.0px;top:863.0px;font:400 18px/18px 'Liberation Serif', serif;color:#000;">cong trinh ngam do thi-dinh kem TT 28-2009-</div>
<div class="a" style="left:467.0px;top:887.0px;font:400 18px/18px 'Liberation Serif', serif;color:#000;">BXD</div>
<div class="a" style="left:808.5px;top:875.0px;font:400 18px/18px 'Liberation Serif', serif;color:#000;">pdf</div>
<div class="a" style="left:918.5px;top:875.0px;font:400 18px/18px 'Liberation Serif', serif;color:#000;">cong trinh ngam do thi dinh kem TT 28 2009 BXD</div>
<div class="a" style="left:977.5px;width:800px;text-align:center;top:875.0px;font:400 16.3px/16.3px 'Liberation Sans', sans-serif;color:#1f1f9a;"><span style="text-decoration:underline;text-underline-offset:1.5px">Mở file</span></div>
<div class="a" style="left:-342.5px;width:800px;text-align:center;top:923.0px;font:400 18px/18px 'Liberation Serif', serif;color:#000;">11</div>
<div class="a" style="left:90.0px;top:911.0px;font:400 18px/18px 'Liberation Serif', serif;color:#000;">Danh-sach-tieu-</div>
<div class="a" style="left:90.0px;top:935.0px;font:400 18px/18px 'Liberation Serif', serif;color:#000;">chuan</div>
<div class="a" style="left:244.0px;top:922.0px;font:400 18px/18px 'Liberation Serif', serif;color:#000;width:219px;overflow:hidden">D:\GXD WORK\Danh-sach-tieu-chuan</div>
<div class="a" style="left:467.0px;top:923.0px;font:400 18px/18px 'Liberation Serif', serif;color:#000;">Electrical&nbsp; Install&nbsp; 2016</div>
<div class="a" style="left:808.5px;top:923.0px;font:400 18px/18px 'Liberation Serif', serif;color:#000;">pdf</div>
<div class="a" style="left:918.5px;top:923.0px;font:400 18px/18px 'Liberation Serif', serif;color:#000;">Electrical Install 2016</div>
<div class="a" style="left:977.5px;width:800px;text-align:center;top:923.0px;font:400 16.3px/16.3px 'Liberation Sans', sans-serif;color:#1f1f9a;"><span style="text-decoration:underline;text-underline-offset:1.5px">Mở file</span></div>
<div class="a" style="left:1895px;top:224px;width:24px;height:716px;background:#e6e6e6"></div>
<div class="a" style="left:1898px;top:225px;width:19px;height:19px;background:#fff;border:1px solid #c6c6c6;box-sizing:border-box"></div>
<svg class="a" style="left:1903px;top:231px;" width="9" height="6" viewBox="0 0 9 6"><path d="M0 5.5H9L4.5 0Z" fill="#606060"/></svg>
<div class="a" style="left:1898px;top:244px;width:19px;height:183px;background:#fff;border:1px solid #c6c6c6;border-top:none;box-sizing:border-box"></div>
<div class="a" style="left:1898px;top:427px;width:19px;height:495px;background:#dadada"></div>
<div class="a" style="left:1898px;top:922px;width:19px;height:19px;background:#fff;border:1px solid #c6c6c6;box-sizing:border-box"></div>
<svg class="a" style="left:1903px;top:929px;" width="9" height="6" viewBox="0 0 9 6"><path d="M0 0H9L4.5 5.5Z" fill="#606060"/></svg>
<div class="a" style="left:0px;top:940px;width:1919px;height:29px;background:#e6e6e6"></div>
<div class="a" style="left:0px;top:968px;width:1919px;height:1px;background:#d0d0d0"></div>
<svg class="a" style="left:27px;top:948px;" width="8" height="13" viewBox="0 0 8 13"><path d="M6 1L1 6.5L6 12Z" fill="#c0c0c0"/></svg>
<svg class="a" style="left:55px;top:948px;" width="8" height="13" viewBox="0 0 8 13"><path d="M1 1L6 6.5L1 12Z" fill="#c0c0c0"/></svg>
<div class="a" style="left:103px;top:944px;width:1px;height:22px;background:#b0b0b0"></div>
<div class="a" style="left:106px;top:943px;width:84px;height:23px;background:#00b0f0"></div>
<div class="a" style="left:-252.0px;width:800px;text-align:center;top:944.0px;font:400 17px/17px 'Liberation Sans', sans-serif;color:#1b2b3b;">Van ban</div>
<div class="a" style="left:280px;top:943px;width:96px;height:23px;background:#00b050"></div>
<div class="a" style="left:-72.5px;width:800px;text-align:center;top:944.0px;font:400 17px/17px 'Liberation Sans', sans-serif;color:#1b2b3b;">Quy trinh</div>
<div class="a" style="left:380px;top:943px;width:94px;height:23px;background:#3fc7f4"></div>
<div class="a" style="left:27.0px;width:800px;text-align:center;top:944.0px;font:400 17px/17px 'Liberation Sans', sans-serif;color:#1b2b3b;">Bieu mau</div>
<div class="a" style="left:479px;top:943px;width:99px;height:23px;background:#3fc7f4"></div>
<div class="a" style="left:128.5px;width:800px;text-align:center;top:944.0px;font:400 17px/17px 'Liberation Sans', sans-serif;color:#1b2b3b;">Giao trinh</div>
<div class="a" style="left:583px;top:943px;width:86px;height:23px;background:#3fc7f4"></div>
<div class="a" style="left:226.0px;width:800px;text-align:center;top:944.0px;font:400 17px/17px 'Liberation Sans', sans-serif;color:#1b2b3b;">Link hay</div>
<div class="a" style="left:674px;top:943px;width:62px;height:23px;background:#ffff00"></div>
<div class="a" style="left:304.2px;width:800px;text-align:center;top:944.0px;font:400 17px/17px 'Liberation Sans', sans-serif;color:#1b2b3b;">CPTV</div>
<div class="a" style="left:740px;top:943px;width:50px;height:23px;background:#ffff00"></div>
<div class="a" style="left:365.0px;width:800px;text-align:center;top:944.0px;font:400 17px/17px 'Liberation Sans', sans-serif;color:#1b2b3b;">CPK</div>
<div class="a" style="left:278px;top:944px;width:1px;height:22px;background:#b4b4b4"></div>
<div class="a" style="left:377px;top:944px;width:1px;height:22px;background:#b4b4b4"></div>
<div class="a" style="left:476px;top:944px;width:1px;height:22px;background:#b4b4b4"></div>
<div class="a" style="left:581px;top:944px;width:1px;height:22px;background:#b4b4b4"></div>
<div class="a" style="left:671px;top:944px;width:1px;height:22px;background:#b4b4b4"></div>
<div class="a" style="left:738px;top:944px;width:1px;height:22px;background:#b4b4b4"></div>
<div class="a" style="left:792px;top:944px;width:1px;height:22px;background:#b4b4b4"></div>
<div class="a" style="left:192px;top:940px;width:86px;height:26px;background:linear-gradient(#ffffff 10%,#f2b8b8);border:1px solid #b0b0b0;border-top:none;box-sizing:border-box"></div>
<div class="a" style="left:192px;top:963px;width:86px;height:3px;background:#217346"></div>
<div class="a" style="left:-165.0px;width:800px;text-align:center;top:944.0px;font:700 16.5px/16.5px 'Liberation Sans', sans-serif;color:#2a6b40;">Quan ly</div>
<svg class="a" style="left:825px;top:944px;" width="22" height="22" viewBox="0 0 22 22"><circle cx="11" cy="11" r="9.5" fill="none" stroke="#7a7a7a" stroke-width="1.3"/><path d="M11 5.5V16.5M5.5 11H16.5" stroke="#7a7a7a" stroke-width="1.6"/></svg>
<div class="a" style="left:1220px;top:946px;width:2px;height:2px;background:#a0a0a0"></div>
<div class="a" style="left:1220px;top:952px;width:2px;height:2px;background:#a0a0a0"></div>
<div class="a" style="left:1220px;top:958px;width:2px;height:2px;background:#a0a0a0"></div>
<div class="a" style="left:1236px;top:945px;width:659px;height:19px;background:#dadada"></div>
<div class="a" style="left:1236px;top:945px;width:19px;height:19px;background:#fff;border:1px solid #c6c6c6;box-sizing:border-box"></div>
<svg class="a" style="left:1242px;top:950px;" width="6" height="9" viewBox="0 0 6 9"><path d="M5.5 0V9L0 4.5Z" fill="#606060"/></svg>
<div class="a" style="left:1254px;top:945px;width:497px;height:19px;background:#fff;border:1px solid #c6c6c6;border-left:none;box-sizing:border-box"></div>
<div class="a" style="left:1876px;top:945px;width:19px;height:19px;background:#fff;border:1px solid #c6c6c6;box-sizing:border-box"></div>
<svg class="a" style="left:1883px;top:950px;" width="6" height="9" viewBox="0 0 6 9"><path d="M0 0V9L5.5 4.5Z" fill="#606060"/></svg>
<div class="a" style="left:0px;top:969px;width:1919px;height:27px;background:#f3f2f1"></div>
<div class="a" style="left:9.0px;top:978.0px;font:400 12.4px/12.4px 'Liberation Sans', sans-serif;color:#444;">Ready</div>
<div class="a" style="left:1555px;top:969px;width:49px;height:27px;background:#c8c6c4"></div>
<svg class="a" style="left:1569px;top:974px;" width="20" height="17" viewBox="0 0 20 17"><path d="M1 1H19V16H1Z M1 6H19 M1 11H19 M7 1V16 M13 1V16" fill="none" stroke="#333" stroke-width="1.5"/></svg>
<svg class="a" style="left:1620px;top:974px;" width="20" height="17" viewBox="0 0 20 17"><path d="M1 1H19V16H1Z" fill="none" stroke="#333" stroke-width="1.5"/><path d="M5 4H15V13H5Z M7 7H13 M7 10H13" fill="none" stroke="#333" stroke-width="1.2"/></svg>
<svg class="a" style="left:1670px;top:974px;" width="20" height="17" viewBox="0 0 20 17"><path d="M1 1H19V16H1Z" fill="none" stroke="#333" stroke-width="1.5"/><path d="M1 9.5H13V1M7.5 1V9.5" fill="none" stroke="#333" stroke-width="1.3"/></svg>
<div class="a" style="left:1712px;top:982px;width:9px;height:1.2px;background:#444"></div>
<div class="a" style="left:1728px;top:982px;width:124px;height:1px;background:#a0a0a0"></div>
<div class="a" style="left:1778px;top:975px;width:6px;height:15px;background:#666"></div>
<div class="a" style="left:1790px;top:978px;width:1px;height:9px;background:#888"></div>
<div class="a" style="left:1858px;top:982px;width:11px;height:1.2px;background:#444"></div>
<div class="a" style="left:1863px;top:976.5px;width:1.2px;height:11px;background:#444"></div>
<div class="a" style="left:1884.5px;top:978.0px;font:400 13.6px/13.6px 'Liberation Sans', sans-serif;color:#444;">85%</div>
<svg class="a" style="left:19px;top:56px;" width="40" height="40" viewBox="0 0 40 40"><path d="M17.47 6.84 L18.22 3.90 L21.78 3.90 L22.53 6.84 L24.39 7.34 L26.51 5.17 L29.59 6.94 L28.77 9.87 L30.13 11.23 L33.06 10.41 L34.83 13.49 L32.66 15.61 L33.16 17.47 L36.10 18.22 L36.10 21.78 L33.16 22.53 L32.66 24.39 L34.83 26.51 L33.06 29.59 L30.13 28.77 L28.77 30.13 L29.59 33.06 L26.51 34.83 L24.39 32.66 L22.53 33.16 L21.78 36.10 L18.22 36.10 L17.47 33.16 L15.61 32.66 L13.49 34.83 L10.41 33.06 L11.23 30.13 L9.87 28.77 L6.94 29.59 L5.17 26.51 L7.34 24.39 L6.84 22.53 L3.90 21.78 L3.90 18.22 L6.84 17.47 L7.34 15.61 L5.17 13.49 L6.94 10.41 L9.87 11.23 L11.23 9.87 L10.41 6.94 L13.49 5.17 L15.61 7.34Z" fill="#5b7a8b" stroke="#5b7a8b" stroke-width="0.8" stroke-linejoin="round"/><circle cx="20" cy="20" r="9.8" fill="#3d5564"/><circle cx="20" cy="20" r="8.3" fill="#f3f2f1"/><path d="M20 12V20M20 20L12.8 24.2M20 20L27.2 24.2" stroke="#3d5564" stroke-width="2.2"/><circle cx="20" cy="20.5" r="3.6" fill="#3d5564"/></svg>
<svg class="a" style="left:92px;top:56px;" width="20" height="20" viewBox="0 0 20 20"><rect x="2" y="5.5" width="14" height="11" rx="1" fill="#f5c870" stroke="#d8a044" stroke-width="1"/><path d="M6.5 5.5V3.5H11.5V5.5" fill="none" stroke="#d8a044" stroke-width="1.2"/><path d="M2 10.5H16" stroke="#d8a044" stroke-width="1"/><circle cx="14.5" cy="13.5" r="3.2" fill="#dceefa" stroke="#7fb6e0" stroke-width="1.2"/><path d="M12.2 15.8L9.5 18.5" stroke="#7fb6e0" stroke-width="1.6"/></svg>
<svg class="a" style="left:120px;top:56px;" width="21" height="20" viewBox="0 0 21 20"><path d="M0.7 0.7H20.3V19.3H3L0.7 17Z" fill="#d980e2" stroke="#8f3aa0" stroke-width="1.2"/><rect x="4.8" y="1.5" width="9.6" height="6" fill="#fff" stroke="#8f3aa0" stroke-width="0.8"/><rect x="5.5" y="13" width="9" height="5.5" fill="#fff" stroke="#8f3aa0" stroke-width="0.8"/></svg>
<svg class="a" style="left:147px;top:57px;" width="22" height="17" viewBox="0 0 22 17"><path d="M1 14.5V2H6.5L8 3.5H15V6" fill="#fff" stroke="#333" stroke-width="1.4" stroke-linejoin="round"/><path d="M1 14.5L4.5 6H20L16.5 14.5Z" fill="#f7f7f7" stroke="#333" stroke-width="1.4" stroke-linejoin="round"/></svg>
<svg class="a" style="left:179px;top:57px;" width="18" height="19" viewBox="0 0 18 19"><path d="M1.5 1H8.5L12 4.5V16.5H1.5Z" fill="#fdfdfd" stroke="#cfcfcf" stroke-width="1"/><circle cx="11.5" cy="13.5" r="3.8" fill="#e6f3e6" stroke="#8cc78c" stroke-width="1.3"/><path d="M11.5 11.3V15.7M9.3 13.5H13.7" stroke="#8cc78c" stroke-width="1.1"/></svg>
<svg class="a" style="left:205px;top:57px;" width="18" height="18" viewBox="0 0 18 18"><rect x="6.3" y="1" width="5" height="4" fill="#7eaae6"/><path d="M8.8 5V8.5M2.8 12V8.5H14.8V12M8.8 8.5V12" fill="none" stroke="#a8a8a8" stroke-width="0.9"/><rect x="1" y="12" width="3.6" height="4.5" fill="#b0dca8" stroke="#8cc080" stroke-width="0.6"/><rect x="7" y="12" width="3.6" height="4.5" fill="#b0dca8" stroke="#8cc080" stroke-width="0.6"/><rect x="13" y="12" width="3.6" height="4.5" fill="#b0dca8" stroke="#8cc080" stroke-width="0.6"/></svg>
<svg class="a" style="left:234px;top:57px;" width="17" height="18" viewBox="0 0 17 18"><path d="M2 15.5L9.5 8" stroke="#4f6474" stroke-width="3" stroke-linecap="round"/><path d="M8.3 8.8A4.3 4.3 0 1 1 14.5 2.2L11.8 4.3L12.8 6L15.4 4.6A4.3 4.3 0 0 1 8.3 8.8Z" fill="#4f6474"/></svg>
<div class="a" style="left:96px;top:86px;font:700 15.5px/16px 'Liberation Sans';color:#000">A</div>
<svg class="a" style="left:120px;top:86px;" width="21" height="17" viewBox="0 0 21 17"><rect x="0.75" y="0.75" width="19.5" height="15.5" fill="#fff" stroke="#555" stroke-width="1.5"/><text x="2.6" y="12.6" font-family="Liberation Sans" font-size="11" fill="#555">ab</text><path d="M16.6 3V14" stroke="#555" stroke-width="1.2"/></svg>
<div class="a" style="left:148px;top:89px;font:400 19px/19px 'Liberation Sans';color:#333">A</div>
<div class="a" style="left:160px;top:79px;font:700 13px/15px 'Liberation Sans';color:#3d9ad8">a</div>
<div class="a" style="left:176.5px;top:83px;font:400 21px/21px 'Liberation Sans';color:#333">A</div>
<svg class="a" style="left:189px;top:86px;" width="8" height="5" viewBox="0 0 8 5"><path d="M0.7 4.3L3.8 1L6.9 4.3" fill="none" stroke="#3d9ad8" stroke-width="1.4"/></svg>
<svg class="a" style="left:206px;top:87px;" width="16" height="16" viewBox="0 0 16 16"><path d="M1 4.5V1H4.5M11.5 1H15V4.5M15 11.5V15H11.5M4.5 15H1V11.5" fill="none" stroke="#222" stroke-width="1.8"/></svg>
<div class="a" style="left:210px;top:89.5px;font:700 9.5px/10px 'Liberation Sans';color:#333">A</div>
<div class="a" style="left:233px;top:87px;font:400 15px/15px 'Liberation Sans';color:#444">ab</div>
<svg class="a" style="left:239px;top:84px;" width="16" height="22" viewBox="0 0 16 22"><path d="M11.5 1.5V5.5" stroke="#e07070" stroke-width="1.2"/><path d="M3.5 17H12.5M9 13.5L12.5 17L9 20.5" fill="none" stroke="#3d9ad8" stroke-width="1.5"/></svg>
<svg class="a" style="left:92px;top:114px;" width="21" height="20" viewBox="0 0 21 20"><rect x="0.75" y="0.75" width="19" height="18.5" fill="#fff" stroke="#444" stroke-width="1.5"/><rect x="1.5" y="1.5" width="17.5" height="2.5" fill="#9a9a9a"/><path d="M1 8H19M1 13H8M7 4V19" stroke="#666" stroke-width="1"/><circle cx="12.5" cy="11.5" r="4" fill="#e8f3fb" stroke="#3a8fd0" stroke-width="1.6"/><path d="M15.3 14.3L19 18.5" stroke="#3a8fd0" stroke-width="2"/></svg>
<svg class="a" style="left:120px;top:114px;" width="19" height="19" viewBox="0 0 19 19"><rect x="1" y="0.75" width="17" height="10.5" fill="#f8f8f8" stroke="#444" stroke-width="1.4"/><path d="M9.5 11.3V17.5M4.5 17.8H14.5" stroke="#444" stroke-width="1.5"/></svg>
<svg class="a" style="left:147px;top:114px;" width="22" height="21" viewBox="0 0 22 21"><path d="M1 1H19L12 9V18.5H9.5V9Z" fill="#f8f8f8" stroke="#444" stroke-width="1.4" stroke-linejoin="round"/><path d="M11.5 15.5H20M16.5 12L20 15.5L16.5 19" fill="none" stroke="#3d9ad8" stroke-width="1.6"/></svg>
<svg class="a" style="left:175px;top:113px;" width="22" height="22" viewBox="0 0 22 22"><path d="M5 1V9M1 5H9M2.2 2.2L7.8 7.8M7.8 2.2L2.2 7.8" stroke="#2f80d0" stroke-width="1.4"/><rect x="9.5" y="9.5" width="11.5" height="11" fill="#fff" stroke="#555" stroke-width="1.2"/><path d="M15.2 9.5V20.5M9.5 15H21" stroke="#777" stroke-width="1.1"/><rect x="9.5" y="2" width="11.5" height="7.5" fill="#6ab4f4" stroke="#1b62a6" stroke-width="1.5"/><path d="M15.2 2V9.5" stroke="#1b62a6" stroke-width="1.3"/><rect x="1.5" y="10" width="8" height="10.5" fill="#6ab4f4" stroke="#1b62a6" stroke-width="1.5"/><path d="M1.5 15.2H9.5" stroke="#1b62a6" stroke-width="1.3"/></svg>
<svg class="a" style="left:204px;top:114px;" width="21" height="21" viewBox="0 0 21 21"><circle cx="10.3" cy="10.3" r="9.3" fill="#fff" stroke="#333" stroke-width="1.3"/></svg>
<div class="a" style="left:208.5px;top:116.5px;font:italic 400 14px/16px 'Liberation Serif';color:#333">fx</div>
<svg class="a" style="left:232px;top:114px;" width="20" height="20" viewBox="0 0 20 20"><circle cx="10" cy="10" r="9.2" fill="#fff" stroke="#333" stroke-width="1.4"/><path d="M15 10H5.5M9 6L5 10L9 14" fill="none" stroke="#333" stroke-width="1.4"/></svg>
<svg class="a" style="left:288px;top:56px;" width="40" height="40" viewBox="0 0 40 40"><g fill="#8cbaf0" stroke="#5c8fd0" stroke-width="1" stroke-linejoin="round"><path d="M1.5 15.5C4 7 11.5 1.2 20 1.2C27 1.2 32.5 5 35.5 8.5L39 5V17.5H26.5L31 13.2C28.5 10.2 24.5 8 20 8C14.5 8 10 11 8 15.5Z"/><path d="M38.5 24.5C36 33 28.5 38.8 20 38.8C13 38.8 7.5 35 4.5 31.5L1 35V22.5H13.5L9 26.8C11.5 29.8 15.5 32 20 32C25.5 32 30 29 32 24.5Z"/></g></svg>
<svg class="a" style="left:367px;top:57px;" width="36" height="39" viewBox="0 0 36 39"><path d="M1.5 1H19.5L27.5 9V36.5H1.5Z" fill="#fbfdff" stroke="#6b97c8" stroke-width="1.2"/><path d="M19.5 1V9H27.5Z" fill="#dcefff" stroke="#6b97c8" stroke-width="1.2" stroke-linejoin="round"/><path d="M7 15.5H23M7 18.5H20M7 21.5H23M7 24.5H19M7 27.5H21" stroke="#6e8aa8" stroke-width="1.2"/><circle cx="26" cy="30" r="8.6" fill="#8cbaf0" stroke="#5c8fd0" stroke-width="1.2"/><path d="M26 25V35M21 30H31" stroke="#fff" stroke-width="2.2"/></svg>
<svg class="a" style="left:426px;top:56px;" width="40" height="40" viewBox="0 0 40 40"><path d="M15.5 7H31L38.5 14.5V38.5H15.5Z" fill="#dcedfc" stroke="#6b97c8" stroke-width="1.1"/><path d="M31 7V14.5H38.5" fill="#c4e0fa" stroke="#6b97c8" stroke-width="1.1"/><path d="M1.5 1.2H16.5L24 8.7V32.5H1.5Z" fill="#fdfeff" stroke="#6b97c8" stroke-width="1.1"/><path d="M16.5 1.2V8.7H24" fill="#dcefff" stroke="#6b97c8" stroke-width="1.1"/><path d="M7 19.5H16M13 15.5L17.5 19.5L13 23.5" fill="none" stroke="#4a88cc" stroke-width="2.2"/><path d="M35 25.5H26M29 21.5L24.5 25.5L29 29.5" fill="none" stroke="#4a88cc" stroke-width="2.2"/></svg>
<svg class="a" style="left:492px;top:57px;" width="38" height="37" viewBox="0 0 38 37"><path d="M1.5 5.5L5.5 9.5L12.5 2" fill="none" stroke="#2b4a40" stroke-width="3.6"/><path d="M1.5 5.5L5.5 9.5L12.5 2" fill="none" stroke="#4aa878" stroke-width="2"/><path d="M1.5 17L5.5 21L12.5 13.5" fill="none" stroke="#2b4a40" stroke-width="3.6"/><path d="M1.5 17L5.5 21L12.5 13.5" fill="none" stroke="#4aa878" stroke-width="2"/><path d="M2.5 25.5L11 34M11 25.5L2.5 34" stroke="#5a2a30" stroke-width="3.6"/><path d="M2.5 25.5L11 34M11 25.5L2.5 34" stroke="#e25a68" stroke-width="2"/><rect x="17.5" y="4.5" width="18.5" height="5" rx="0.8" fill="#8cbaf0" stroke="#2c3c52" stroke-width="1.2"/><rect x="17.5" y="16.5" width="18.5" height="5" rx="0.8" fill="#8cbaf0" stroke="#2c3c52" stroke-width="1.2"/><rect x="17.5" y="27.5" width="18.5" height="5" rx="0.8" fill="#8cbaf0" stroke="#2c3c52" stroke-width="1.2"/></svg>
<svg class="a" style="left:550px;top:56px;" width="40" height="40" viewBox="0 0 40 40"><g fill="#bce6bc" stroke="#94d094" stroke-width="1"><rect x="1.5" y="1.5" width="21" height="4.8"/><rect x="1.5" y="9.7" width="17" height="4.8"/><rect x="1.5" y="17.7" width="13" height="4.8"/><rect x="1.5" y="25.7" width="9" height="4.8"/><rect x="1.5" y="33.6" width="5" height="4.8"/></g><path d="M31.5 1V33" stroke="#3b6fb8" stroke-width="2.6"/><path d="M25 29.5H38L31.5 38Z" fill="#3b6fb8"/></svg>
<svg class="a" style="left:620px;top:52px;" width="50" height="48" viewBox="0 0 50 48"><g transform="translate(32.2 14.6) rotate(-45)"><rect x="-10" y="-5.8" width="20" height="11.6" rx="5.8" fill="none" stroke="#5a88c8" stroke-width="4.2"/><rect x="-10" y="-5.8" width="20" height="11.6" rx="5.8" fill="none" stroke="#8cbaf0" stroke-width="2.2"/></g><g transform="translate(13.7 32.6) rotate(-45)"><rect x="-10" y="-5.8" width="20" height="11.6" rx="5.8" fill="none" stroke="#5a88c8" stroke-width="4.2"/><rect x="-10" y="-5.8" width="20" height="11.6" rx="5.8" fill="none" stroke="#8cbaf0" stroke-width="2.2"/></g><path d="M18.8 27.5L27.2 19.4" stroke="#5a88c8" stroke-width="3.2"/><path d="M18.8 27.5L27.2 19.4" stroke="#8cbaf0" stroke-width="1.4"/></svg>
<svg class="a" style="left:701px;top:58px;" width="17" height="17" viewBox="0 0 17 17"><rect x="0.6" y="0.6" width="15.3" height="15.3" fill="#fff" stroke="#444" stroke-width="1.2"/><path d="M3.3 8.3L6.5 11.5L13 4.5" fill="none" stroke="#333" stroke-width="1.5"/></svg>
<svg class="a" style="left:701px;top:87px;" width="17" height="17" viewBox="0 0 17 17"><rect x="0.6" y="0.6" width="15.3" height="15.3" fill="#fff" stroke="#444" stroke-width="1.2"/></svg>
<svg class="a" style="left:1047px;top:115px;" width="16" height="16" viewBox="0 0 16 16"><circle cx="6.5" cy="6.5" r="4.6" fill="none" stroke="#222" stroke-width="1.7"/><path d="M9.8 9.8L13.8 13.8" stroke="#222" stroke-width="2.2" stroke-linecap="round"/></svg>
<svg class="a" style="left:1097px;top:57px;" width="38" height="38" viewBox="0 0 38 38"><rect x="1" y="1" width="36" height="36" rx="3.5" fill="#8ab4ee" stroke="#76a0dc" stroke-width="1"/><circle cx="19" cy="19" r="13.3" fill="none" stroke="#fff" stroke-width="1.3"/><path d="M11.5 28L19 9M19 9L26.5 28M9 20.5H29M15.2 15.5L17 18.5" fill="none" stroke="#fff" stroke-width="1.6" stroke-linecap="round"/></svg>
<svg class="a" style="left:1170px;top:58px;" width="36" height="36" viewBox="0 0 36 36"><circle cx="17.8" cy="17.9" r="17.2" fill="#2192ec"/><path d="M12.7 13.2C12.7 9.8 15 8 18 8C21.2 8 23.3 10 23.3 12.8C23.3 16.5 18.8 16.8 18.8 20.5V21.5" fill="none" stroke="#fff" stroke-width="3.3"/><circle cx="18.8" cy="26.5" r="2.1" fill="#fff"/></svg>
<svg class="a" style="left:1252px;top:56px;" width="40" height="40" viewBox="0 0 40 40"><g fill="#8dc5b1" stroke="#70ab96" stroke-width="0.8"><rect x="2" y="13.2" width="8.3" height="8.2"/><rect x="2" y="21.4" width="8.3" height="8.2"/><rect x="2" y="29.6" width="8.3" height="8.2"/><rect x="10.3" y="21.4" width="8.3" height="8.2"/><rect x="10.3" y="29.6" width="8.3" height="8.2"/><rect x="18.6" y="29.6" width="8.3" height="8.2"/><rect x="30.6" y="2.2" width="7" height="7"/><rect x="16.5" y="5.2" width="6.5" height="6.5" transform="rotate(35 19.8 8.5)"/><rect x="29.5" y="16.8" width="6.5" height="6.5" transform="rotate(-18 32.8 20)"/></g></svg>
<svg class="a" style="left:1323px;top:54px;" width="24" height="34" viewBox="0 0 24 34"><path d="M2 14L11.5 9.5L21.5 14V28.5L11.5 33L2 28.5Z" fill="#f28484"/><path d="M11.5 19V33L2 28.5V14Z" fill="#ec7676"/><path d="M2 14L11.5 19L21.5 14" fill="none" stroke="#f6a0a0" stroke-width="0.8"/><ellipse cx="11.8" cy="9.5" rx="6.3" ry="8" fill="#c4e2fa" stroke="#a8d0f0" stroke-width="0.7"/><ellipse cx="11.8" cy="12" rx="1.8" ry="3" fill="#7a9ad0"/></svg>
<svg class="a" style="left:1327px;top:97px;" width="17" height="17" viewBox="0 0 17 17"><circle cx="8.2" cy="8.5" r="7.6" fill="#1d5a98"/><circle cx="8.2" cy="8.5" r="5.8" fill="none" stroke="#e8f2fb" stroke-width="0.6"/><path d="M4.2 11.5L6.2 5.2H12.5L11.8 7.2H8L7.2 9.6H11L10.4 11.5Z" fill="#fff"/><path d="M7 5.5L5.2 11.3" stroke="#1d5a98" stroke-width="0.9"/></svg>
<svg class="a" style="left:1581px;top:57px;" width="17" height="17" viewBox="0 0 17 17"><path d="M1.5 15.5C1 10 1.5 2 8.5 1.5C15.5 2 16 10 15.5 15.5Z" fill="#f2b892"/><ellipse cx="8.5" cy="10.5" rx="4.3" ry="4.8" fill="#f6e2a2"/><path d="M4.5 7.5C6.5 8 10 6.5 11.5 5.5C12.5 7 12.8 8 12.8 9" fill="#f2b892"/><circle cx="6.8" cy="10.3" r="0.6" fill="#555"/><circle cx="10.3" cy="10.3" r="0.6" fill="#555"/><circle cx="8.5" cy="13.3" r="0.7" fill="#333"/></svg>
<svg class="a" style="left:1693px;top:14px;" width="18" height="18" viewBox="0 0 18 18"><path d="M1.5 6.5V16.5H13.5V12.5" fill="none" stroke="#217346" stroke-width="1.4"/><path d="M5 13C5.5 8.5 8.5 6 12.5 6V9L17 4.8L12.5 0.8V3.5C7.5 3.5 5 7.5 5 13Z" fill="none" stroke="#217346" stroke-width="1.3" stroke-linejoin="round"/></svg>
<svg class="a" style="left:1789px;top:15px;" width="17" height="16" viewBox="0 0 17 16"><path d="M1 1H15V11H6L2.5 14.5V11H1Z" fill="none" stroke="#217346" stroke-width="1.4" stroke-linejoin="round"/></svg>
<svg class="a" style="left:1896px;top:156px;" width="14" height="8" viewBox="0 0 14 8"><path d="M1 7L7 1.5L13 7" fill="none" stroke="#444" stroke-width="1.4"/></svg>
<svg class="a" style="left:116px;top:192px;" width="9" height="6" viewBox="0 0 9 6"><path d="M0 0H9L4.5 5Z" fill="#666"/></svg>
<div class="a" style="left:150px;top:189px;width:2.5px;height:2.5px;background:#999;border-radius:1px"></div>
<div class="a" style="left:150px;top:194.5px;width:2.5px;height:2.5px;background:#999;border-radius:1px"></div>
<div class="a" style="left:150px;top:200px;width:2.5px;height:2.5px;background:#999;border-radius:1px"></div>
<svg class="a" style="left:185px;top:189px;" width="15" height="15" viewBox="0 0 15 15"><path d="M1.5 1.5L13.5 13.5M13.5 1.5L1.5 13.5" stroke="#a8a8a8" stroke-width="1.8"/></svg>
<svg class="a" style="left:230px;top:190px;" width="17" height="13" viewBox="0 0 17 13"><path d="M1.5 6.5L6 11L15.5 1.5" fill="none" stroke="#a8a8a8" stroke-width="1.8"/></svg>
<div class="a" style="left:274px;top:185.5px;font:italic 700 17px/20px 'Liberation Serif';color:#555">fx</div>
<svg class="a" style="left:1898px;top:191px;" width="11" height="8" viewBox="0 0 11 8"><path d="M1 1.5L5.5 6L10 1.5" fill="none" stroke="#555" stroke-width="2.2"/></svg>
<svg class="a" style="left:12px;top:228px;" width="14" height="14" viewBox="0 0 14 14"><path d="M13 1V13H1Z" fill="#b4b4b4"/></svg>
<svg class="a" style="left:55.1px;top:125px;" width="8" height="5" viewBox="0 0 8 5"><path d="M0.8 0.8L4 4L7.2 0.8" fill="none" stroke="#444" stroke-width="1.2"/></svg>
<svg class="a" style="left:664.3px;top:125px;" width="8" height="5" viewBox="0 0 8 5"><path d="M0.8 0.8L4 4L7.2 0.8" fill="none" stroke="#444" stroke-width="1.2"/></svg>
<svg class="a" style="left:1122.8px;top:125px;" width="8" height="5" viewBox="0 0 8 5"><path d="M0.8 0.8L4 4L7.2 0.8" fill="none" stroke="#444" stroke-width="1.2"/></svg>
<svg class="a" style="left:1200.8px;top:125px;" width="8" height="5" viewBox="0 0 8 5"><path d="M0.8 0.8L4 4L7.2 0.8" fill="none" stroke="#444" stroke-width="1.2"/></svg>
<div class="a" style="left:611px;top:144px;width:263px;height:151px;background:#fff;border:1px solid #c8c8c8;box-sizing:border-box;box-shadow:1px 2px 4px rgba(0,0,0,0.18)"></div>
<div class="a" style="left:657.5px;top:156.0px;font:400 15.1px/15.1px 'Liberation Sans', sans-serif;color:#333;">Đổi tên files</div>
<div class="a" style="left:657.5px;top:192.0px;font:400 15.1px/15.1px 'Liberation Sans', sans-serif;color:#333;">Đổi tên thư mục</div>
<div class="a" style="left:652px;top:219px;width:220px;height:1px;background:#e1e1e1"></div>
<div class="a" style="left:657.5px;top:230.0px;font:400 15.1px/15.1px 'Liberation Sans', sans-serif;color:#333;">Kiểm tra liên kết lỗi</div>
<div class="a" style="left:657.5px;top:267.0px;font:400 15.1px/15.1px 'Liberation Sans', sans-serif;color:#333;">Thay đổi đường dẫn liên kết</div>
<svg class="a" style="left:625px;top:151px;" width="22" height="22" viewBox="0 0 22 22"><rect x="1.5" y="7" width="19" height="7.5" fill="#e4f0fb" stroke="#9cc4ea" stroke-width="1"/><rect x="3.5" y="9.5" width="12" height="2.5" fill="#9cc4ea"/><path d="M16.5 2V20M14 2H19M14 20H19" stroke="#9cc4ea" stroke-width="1.1"/></svg>
<svg class="a" style="left:625px;top:187px;" width="22" height="22" viewBox="0 0 22 22"><path d="M1.5 5V19H20.5V6.5H9.5L8 4.5H2.5Z" fill="#f3cf80" stroke="#d8ab55" stroke-width="1"/><path d="M1.5 7.5H20.5" stroke="#e5bd68" stroke-width="0.8"/><circle cx="11" cy="11.5" r="2.3" fill="#7f96b0"/><path d="M7 17C7 14.5 8.8 13.8 11 13.8C13.2 13.8 15 14.5 15 17Z" fill="#7f96b0"/></svg>
<svg class="a" style="left:625px;top:226px;" width="22" height="22" viewBox="0 0 22 22"><g transform="translate(14.5 7.5) rotate(-45)"><rect x="-6" y="-3.6" width="12" height="7.2" rx="3.6" fill="none" stroke="#6b94d0" stroke-width="2.6"/></g><g transform="translate(6.8 15) rotate(-45)"><rect x="-6" y="-3.6" width="12" height="7.2" rx="3.6" fill="none" stroke="#6b94d0" stroke-width="2.6"/></g><path d="M8.5 13L12.5 9.5" stroke="#6b94d0" stroke-width="2"/><circle cx="16" cy="16.5" r="4.2" fill="#f07070"/><path d="M14.3 14.8L17.7 18.2M17.7 14.8L14.3 18.2" stroke="#fff" stroke-width="1"/></svg>
<svg class="a" style="left:625px;top:262px;" width="22" height="22" viewBox="0 0 22 22"><path d="M4 6.5H19.5" stroke="#3cb04a" stroke-width="2.6"/><path d="M1 6.5L6.5 2V11Z" fill="#3cb04a"/><path d="M2.5 15.5H18" stroke="#3cb04a" stroke-width="2.6"/><path d="M21 15.5L15.5 11V20Z" fill="#3cb04a"/></svg>
<div class="a" style="left:577px;top:31px;width:350px;height:293px;border:3px solid #e5484d;box-sizing:border-box;box-shadow:1px 2px 3px rgba(0,0,0,0.35), inset 1px 2px 3px rgba(0,0,0,0.18)"></div>
<svg class="a" style="left:0;top:0" width="700" height="300" viewBox="0 0 700 300"><defs><filter id="sh" x="-20%" y="-50%" width="140%" height="200%"><feGaussianBlur in="SourceAlpha" stdDeviation="2"/><feOffset dx="1" dy="3" result="o"/><feComponentTransfer><feFuncA type="linear" slope="0.45"/></feComponentTransfer><feMerge><feMergeNode/><feMergeNode in="SourceGraphic"/></feMerge></filter></defs><g filter="url(#sh)"><g transform="translate(432 228.2) rotate(-19.67)"><path d="M0 -4.9L169.5 -5.4L170 -14.2L198.2 0L170 14.2L169.5 5.4L0 4.9A4.9 4.9 0 0 1 0 -4.9Z" fill="#f03c3c"/></g></g></svg>
</body></html>
